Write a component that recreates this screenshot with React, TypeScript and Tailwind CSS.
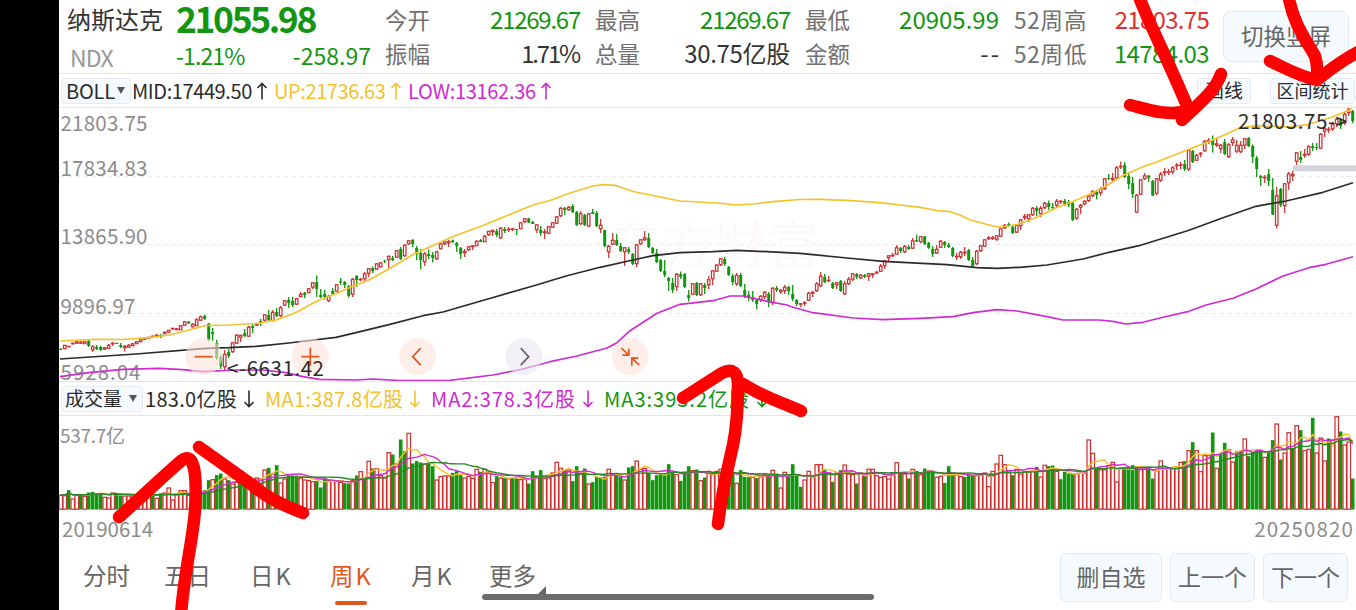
import type { ReactNode } from "react";
import clsx from "clsx";

const RED = "#cc3333";
const GREEN = "#0f980c";
const YELLOW = "#f4c22c";
const PURPLE = "#cf2bd0";

const STEP = 4;
const FIRST_X = 1.7;

// weekly candles: [open, close, high, low] on the chart's vertical scale
const candles: number[][] = [
  [349, 350, 348, 350], [349, 345, 345, 349], [347, 346, 346, 347], [344, 343, 342.5, 344.5], [343.5, 341.5, 341, 344], [343.5, 342, 341, 344],
  [344, 341.5, 341, 344], [341, 346, 340, 347], [350, 346.5, 345, 352], [347, 349, 345, 350], [347, 350, 346, 351], [349.5, 347.5, 347, 350],
  [348.5, 345, 344, 349], [344, 343, 342, 346], [343, 344, 342.5, 344], [345, 347, 343, 348], [348, 346, 345, 351.5], [347.5, 345, 344, 348],
  [346, 343.5, 343, 346], [344, 341.5, 341, 344], [342, 339.5, 339, 342], [339.5, 338, 337, 340], [338.5, 337, 337, 339], [337, 336, 335.5, 337],
  [337, 335, 334, 337], [335, 337, 334, 338], [334, 332, 331.5, 334], [332.5, 330, 330, 333], [329, 328, 328, 330], [330, 328.5, 328, 330],
  [330, 325.5, 325, 330], [325.5, 321.5, 321, 326], [321.5, 323.5, 321, 324], [327, 324, 323, 327.5], [326, 319.5, 318, 326], [320.5, 316.5, 315.5, 321],
  [316, 319, 314.5, 320], [323.5, 340, 323, 341.5], [332, 334, 328, 341], [343, 358, 340, 360], [357, 366, 355, 369], [367, 354, 350, 370],
  [352, 356, 349, 358], [352, 342.5, 342, 353], [343.5, 335, 334, 344], [337.5, 335, 335, 342], [333, 336, 329, 337], [336.5, 327, 326, 337],
  [326, 328, 324, 333], [325.5, 323.5, 323, 326], [321, 323, 319, 326], [320.5, 314.5, 314, 321], [315, 320, 310, 321.5], [321, 312, 310, 321],
  [312, 316, 308, 317], [316, 307.5, 306, 317], [305.5, 300.5, 300, 306], [300, 303, 297, 308], [301, 305, 297, 307], [304.5, 298.5, 298, 305],
  [297, 294, 292, 297], [293, 295, 292, 298], [293, 288.5, 288, 293], [287.5, 282.5, 282, 289], [282, 289, 275.5, 297], [295, 297, 289, 298],
  [294, 297, 290, 299.5], [301, 296, 295, 302], [291, 294, 288, 294], [291.5, 284.5, 284, 292], [281, 282.5, 278, 285], [282, 285, 281, 288],
  [286, 296, 285, 297.5], [294.5, 279, 278, 297], [276, 280, 275, 287], [280, 279, 278, 281], [279, 273.5, 272, 281], [273.5, 268.5, 268, 277],
  [268, 271, 266.5, 273], [269.5, 263.5, 263, 270], [267, 262.5, 262, 267.5], [260.5, 261.5, 260, 263], [260, 256, 255.5, 268], [258, 260, 256, 261],
  [257.5, 250.5, 250, 258], [249, 259, 247, 260], [256, 245, 244, 257], [244, 240.5, 240, 245], [240, 244, 239, 247], [248, 254, 246, 260],
  [253, 260, 249, 269.5], [262, 253.5, 252, 266], [254, 256, 249.5, 259], [255, 258, 252, 262.5], [259, 251.5, 251, 260], [249, 243.5, 243, 249.5],
  [244, 241.5, 241, 245], [243, 241.5, 240, 247], [240.5, 242, 239.5, 243], [243, 246, 242, 252], [248, 254, 247, 259], [253, 251, 249, 257],
  [250, 246.5, 246, 251], [247, 245.5, 245, 250], [246, 241, 240, 246], [240, 242, 239, 242], [242, 236, 235, 242], [235, 231, 231, 236],
  [232, 230, 230, 236], [231, 235, 229, 237], [238, 228, 227, 239], [229, 231, 227, 233], [230, 229, 227, 232], [229.5, 228.5, 228, 231],
  [229, 230, 229, 235], [229, 222.5, 222, 229], [222, 218.5, 218, 223], [218.5, 222.5, 218, 223], [222, 224, 221, 224], [230, 224.5, 224, 233],
  [230, 233, 226, 236], [233, 231.5, 229, 239], [233.5, 226.5, 226, 234], [227.5, 222.5, 222, 228], [223.5, 216.5, 216, 224], [216, 208, 207, 217],
  [208, 210, 207, 215], [210, 207, 206, 211], [206, 212, 204, 213], [212, 225, 211, 226], [224, 213.5, 211, 225], [215, 225, 214, 226],
  [226.5, 213.5, 213, 227], [212, 214, 209, 214], [213, 226, 211, 227], [229, 225, 219, 233], [230, 246, 230, 247], [252, 246, 245, 258],
  [244.5, 240, 233, 245], [240, 245, 234, 246], [246, 251, 243, 252], [252, 247.5, 247, 266], [249, 252, 247, 254], [254, 264, 253, 265],
  [264, 244.5, 244, 267], [244, 239.5, 239, 245], [240, 237.5, 231, 241], [238, 247, 233, 248], [248, 253, 247, 254], [253, 262, 249, 263],
  [260, 271, 259, 272], [271, 275, 260, 277], [278, 281, 277, 291], [283, 290, 278, 293], [287, 274, 273, 291], [274, 277, 271.5, 279],
  [274, 287, 273, 288], [295, 298, 290, 301.5], [294.5, 283.5, 283, 295], [283, 295, 282, 296], [295, 283.5, 283, 296], [285, 288, 283, 294],
  [285, 279.5, 276, 289], [279, 270.5, 270, 285], [271.5, 265, 264, 272], [265, 258.5, 258, 266], [259, 264, 257, 266], [267, 275, 266, 276],
  [276, 282, 274, 285], [284, 275, 273, 286], [275, 286, 273, 287], [290, 297, 284, 298], [295, 298, 291, 301], [297, 300, 291, 302],
  [300, 304, 299, 309.5], [300, 296, 295, 302], [297, 292, 291, 299], [294, 302, 292, 307], [303, 288, 287, 305], [288, 290, 286, 292],
  [292, 290, 289, 294], [291, 287, 285, 294], [287, 291, 286, 295], [294, 299, 285, 301], [300, 304, 299, 306], [304, 303.5, 303, 307],
  [303, 302.5, 301, 306], [300.5, 293, 292, 301], [293.5, 292, 291, 297], [291, 283.5, 282, 292], [286, 276, 272, 287], [277, 282, 274, 283],
  [281, 280, 276, 282], [283, 288, 282, 289], [285, 282.5, 282, 289], [281, 291, 280, 292], [294, 283.5, 281, 295], [284, 279, 277, 285],
  [279.5, 273.5, 273, 281], [274, 277, 273, 279], [278, 275, 274, 279], [275, 277, 274, 278], [276.5, 273.5, 273, 281], [275, 273.5, 273, 278],
  [273, 272, 271, 274], [271.5, 266, 264, 272], [266, 260.5, 260, 269], [258, 255.5, 255, 261], [256, 255, 253, 257], [254.5, 247.5, 245, 255],
  [248, 251, 247, 253], [252, 246, 245, 253], [247, 249, 245, 250], [248.5, 240.5, 238, 249], [240, 241.5, 234.5, 242], [242, 236.5, 236, 243],
  [236.5, 244, 236, 245], [243, 248, 242, 249], [249, 254, 246, 257], [253.5, 249, 245, 254], [247.5, 241, 240, 248], [242, 245, 241, 248],
  [245, 247, 243, 248], [248, 256, 247, 257], [257, 256, 253, 260], [257, 252, 251, 259], [253, 252, 247, 256], [250, 260, 249, 261],
  [260, 266, 257, 267], [264, 251, 250, 265], [251, 245.5, 245, 252], [246.5, 239.5, 239, 247], [239, 237.5, 236, 240], [238, 237.5, 236, 240],
  [239.5, 235.5, 235, 241], [236.5, 228.5, 228, 237], [228, 225, 224, 229], [224, 226, 222.5, 227], [227, 233, 226, 234], [232.5, 225, 224, 233],
  [226, 219.5, 219, 230], [218, 216, 214, 220], [219, 214.5, 214, 222], [215, 208, 207, 216], [208, 211, 206, 216], [214, 208, 206, 217],
  [208, 203, 202, 209], [203, 207, 200.5, 210], [207, 208, 203, 209], [205.5, 201, 199, 208], [202, 201, 200, 204], [201, 204, 199, 206],
  [202, 205, 200, 207], [203, 220, 202, 221], [218.5, 209, 208, 220], [207.5, 205, 204, 214], [204, 201, 200, 205], [201, 196, 195, 202],
  [196, 191.5, 190, 197], [192, 195, 190, 199.5], [193, 188.5, 187, 196], [189, 178.5, 178, 190], [178, 179, 174, 180], [180, 178, 173, 181],
  [178, 167.5, 166, 179], [167, 166, 161.5, 169], [165, 177, 162, 178], [176, 184, 172, 189], [183, 194, 177, 198], [212.5, 195, 194, 213],
  [194.5, 179.5, 179, 195], [179, 175.5, 173, 180], [175.5, 178, 175, 182], [181, 195.5, 180, 196], [193.5, 178.5, 178, 195], [180.5, 174, 172, 182],
  [173, 171.5, 168, 176], [172, 171.5, 169, 175], [172, 167.5, 166, 174], [166, 165, 163, 170], [165, 164.5, 162, 169], [164, 169, 160, 171],
  [169.5, 150, 149, 171], [151, 162, 150, 163], [160.5, 155, 154, 161], [154, 153, 152, 157], [151, 141, 140, 152], [142, 140, 138, 144],
  [140, 145, 135.5, 152.5], [145.5, 143.5, 138, 147], [149, 145, 144, 153], [142, 154, 139, 155], [157, 144.5, 143, 158], [143, 139.5, 137, 146],
  [151.5, 145, 140, 153], [152, 145, 141, 153], [145.5, 138.5, 138, 149], [138, 146, 137, 147], [146, 157, 144.5, 163], [158, 169, 156, 177],
  [176, 178, 175, 186], [178, 177, 175, 183], [174, 181, 169, 186], [190, 214.5, 178, 215], [225.5, 195.5, 187, 228.5], [189, 205, 188, 207],
  [206, 183.5, 183, 213], [183, 173.5, 172, 190], [176, 174, 171, 181], [161.5, 152.5, 152, 165], [157, 160, 151, 163], [155.5, 154, 149, 158],
  [154.5, 146.5, 145, 156], [146, 148, 143, 151], [147, 148, 143, 150], [148.5, 134, 133, 149], [131.5, 128.5, 127, 137], [130, 129, 127, 133],
  [129, 124, 122, 131], [124, 119, 118, 127], [120, 126, 118, 129], [123, 114, 112, 125], [113, 109, 108, 116], [111, 121, 110, 123],
];

// weekly turnover, negative for a falling week
const volumes: number[] = [
  44, 43, -58, 33, 45, -44, 41, -51, -53, -49, -49, 38, 36, 51, -50, -43, 42, 42, 42, 42, 42, 43, 45, -46, 35, -49, 51, 66, 30, 46, 58, 58, 44, 45, 60, -52,
  -58, -88, 91, -103, -108, 93, -88, 78, 83, -80, -83, 88, -90, 96, 93, 120, -125, 108, -133, 81, 93, -106, -103, -102, 96, 90, 88, 85, -85, -66, -95, 88,
  86, 86, 83, -79, -78, 88, -102, 115, -96, 146, -123, 124, 103, 96, 172, -165, 138, -210, -175, 230, -138, -145, -141, 138, -138, -130, 90, 100, 102, 102,
  -110, -115, -103, 96, 101, 95, 122, -113, 122, 110, 82, -100, 96, -94, 94, -96, -94, 91, 93, -78, -115, 100, -118, 95, 96, 111, 143, 125, -118, 120,
  -85, -130, 110, -123, 78, -82, -98, -97, -98, 122, 106, -103, -98, 90, -126, -130, 147, 123, 125, -110, -88, -103, -106, -106, -136, -115, 106, -86,
  -113, -130, 118, -120, 88, -96, 116, 106, 116, 122, -113, -113, -110, 80, -118, -98, -97, 98, -94, 98, 108, -103, 119, -106, 66, 113, -100, -136, -103,
  -68, 90, 116, 98, 136, 136, -118, 111, -83, 111, -118, 135, 108, 106, -78, 111, -103, 122, 122, 103, 98, 100, 93, 111, 142, -111, 108, -93, 122, -116,
  106, -123, -118, -113, 98, 101, -80, -130, -111, 106, 100, -98, -106, -103, 103, 106, 111, 70, 116, 138, 164, 136, 118, -103, 122, 108, 113, 116, 116,
  -128, 99, 134, -130, -132, 116, -91, -113, -108, -108, 108, 110, 110, 210, 170, -123, 121, 121, 133, 143, 84, 125, -128, -128, -133, -130, 121, 122,
  -121, -93, 118, 147, 125, 125, 124, 125, 143, -145, 178, -202, 178, 115, 163, 163, -231, 125, -168, -200, 181, 144, -176, -176, 213, -160, -173, -176,
  -178, 158, -176, -208, 258, -150, 171, 232, -185, 253, -238, 178, 182, -275, 171, 216, 147, -213, 210, 280, -234, 195, 204, -93,
];

const upper =
  "1,341 37,339.3 64,339.5 90,337.7 110,335 130,330 147,325.5 170,325 197,323.5 217,320 237,312.5 257,301.5 280,292.5 291,287.3 308,281 328,270 341,262.5 354,254.5 374,245.5 394,236.5 424,225.5 474,205 491,200.5 511,193 534,186 544,184.7 556,185.3 574,191.5 594,195.5 621,201 658,203 678,205 694,204 714,201.7 741,199.5 760,199.3 788,200.3 821,202.7 841,205 861,207.3 878,210.5 891,211.7 901,215 911,220 934,226 941,227 958,224.5 974,219 998,207.5 1014,201.5 1030,194.5 1047,186 1064,175.5 1087,165.5 1097,162.3 1130,149.3 1150,141.5 1164,135.5 1180,128.3 1197,125.7 1214,126.3 1230,127 1250,124.3 1274,116.7 1293,108.8";
const middle =
  "1,359 77,354 147,348.3 170,347.7 197,346.3 230,343 277,337.3 297,332.7 330,324.7 364,315.7 384,312 428,299.3 474,286 508,275.7 541,267.3 574,260 594,255.7 621,252.7 654,251.7 678,250.3 708,251.7 741,253.3 754,254.7 788,258 824,261.3 888,264.7 918,267.7 938,268.3 961,267.3 988,265 1024,259 1050,252.3 1080,245.7 1130,230.3 1164,217.7 1197,206.3 1227,201 1264,192.3 1294,182.7";
const lower =
  "1,376.7 30,372.7 64,369.3 100,368.3 124,369.7 144,371.7 177,370 204,370 227,372.7 244,376.7 260,379.3 297,380 314,379 340,380.5 361,380.7 391,380.3 434,375 464,369 491,361.7 518,356 548,348 558,342.7 571,330.7 598,313.3 621,304.3 654,300.7 671,296 684,296 708,301.3 728,305 734,307.3 754,312.7 794,318 824,319.7 861,318.3 894,316.7 914,312.7 938,309.7 958,311 988,316.7 1004,320 1040,320 1054,321.3 1067,324 1084,322.3 1104,317.3 1130,311.3 1147,305 1174,298.3 1197,289 1224,276 1250,267.7 1267,264.3 1294,256.7";

const VOLUME_BASE = 93.5;

function movingAverage(days: number) {
  return volumes
    .map((_, i) => {
      const slice = volumes.slice(Math.max(0, i - days + 1), i + 1);
      const mean = slice.reduce((sum, v) => sum + Math.abs(v), 0) / slice.length;
      return `${FIRST_X + i * STEP},${(VOLUME_BASE - mean / 3).toFixed(1)}`;
    })
    .join(" ");
}

const quotes = [
  { label: "今开", value: "21269.67", color: "text-[#12960f]", tracking: "tracking-[-1.25px]", width: "w-[195px]" },
  { label: "最高", value: "21269.67", color: "text-[#12960f]", tracking: "tracking-[-1.25px]", width: "w-[195px]" },
  { label: "最低", value: "20905.99", color: "text-[#12960f]", tracking: "tracking-[0px]", width: "w-[194px]" },
  { label: "52周高", value: "21803.75", color: "text-[#e03131]", tracking: "tracking-[-0.7px]", width: "w-[195px]" },
  { label: "振幅", value: "1.71%", color: "text-[#333]", tracking: "tracking-[-2.2px]", width: "w-[194px]" },
  { label: "总量", value: "30.75亿股", color: "text-[#333]", tracking: "tracking-[-0.3px]", width: "w-[195px]" },
  { label: "金额", value: "--", color: "text-[#333]", tracking: "tracking-[2px]", width: "w-[196px]" },
  { label: "52周低", value: "14784.03", color: "text-[#12960f]", tracking: "tracking-[-0.6px]", width: "w-[195px]" },
];

const tabs = [
  { label: "分时", width: "w-[81px]" },
  { label: "五日", width: "w-[86px]" },
  { label: "日K", width: "w-[80px]", latin: true },
  { label: "周K", width: "w-[81px]", latin: true, active: true },
  { label: "月K", width: "w-[78px]", latin: true },
  { label: "更多", width: "w-[60px]", more: true },
];

const axis = [
  { y: 130.5, label: "21803.75", width: 87 },
  { y: 176, label: "17834.83", width: 87 },
  { y: 244, label: "13865.90", width: 87 },
  { y: 313.5, label: "9896.97", width: 75 },
  { y: 380, label: "5928.04", width: 80 },
];

function Arrow({ down }: { down?: boolean }) {
  return (
    <svg width="12" height="18" viewBox="0 0 12 18" fill="none" stroke="currentColor" strokeWidth="1.6" className={clsx("shrink-0", down && "rotate-180")}>
      <path d="M6 17.5V1.5M1.5 6 6 1.5 10.5 6" />
    </svg>
  );
}

function Reading({ children, width, tracking, color, down }: { children: ReactNode; width: string; tracking: string; color: string; down?: boolean }) {
  return (
    <div className={clsx("flex items-center", color)}>
      <span className={clsx("shrink-0 whitespace-nowrap text-[20px] leading-[24px]", width, tracking)}>{children}</span>
      <Arrow down={down} />
    </div>
  );
}

function Chip({ children, className }: { children: ReactNode; className?: string }) {
  return (
    <button className={clsx("flex h-[26px] shrink-0 items-center whitespace-nowrap rounded border border-[#e6ebf1] bg-[#f5faff] text-[#2b2b2b]", className)}>
      {children}
    </button>
  );
}

function Caret() {
  return <span className="border-x-[4px] border-t-[7px] border-x-transparent border-t-[#555]" />;
}

function RoundButton({ cx, muted, children }: { cx: number; muted?: boolean; children: ReactNode }) {
  return (
    <g transform={`translate(${cx} 356.7)`} stroke={muted ? "#666" : "#e2571c"} strokeWidth="1.7" fill="none">
      <circle r="18.5" fill={muted ? "#ebe6f0" : "#fde3dc"} fillOpacity="0.6" stroke="none" />
      {children}
    </g>
  );
}

function PriceChart() {
  return (
    <svg width="1297" height="273" viewBox="0 108 1297 273" className="block shrink-0">
      <g stroke="#ececec" strokeDasharray="5 3">
        <path d="M0 176.5H1297M0 244.5H1297M0 313.5H1297" />
      </g>
      <text x="550" y="264" fontSize="51" fill="#fdf9fb" textLength="210">东方财富</text>
      <g fill="#8c8c8c" fontSize="20.5">
        {axis.map((a) => (
          <text key={a.y} x="1.5" y={a.y} textLength={a.width}>{a.label}</text>
        ))}
      </g>
      <rect x="1234" y="165.3" width="63" height="6" fill="#d3d3dc" />
      {candles.map(([open, close, high, low], i) => {
        const x = FIRST_X + i * STEP;
        const top = Math.min(open, close);
        const height = Math.max(Math.abs(open - close), 1);
        if (close > open) {
          return (
            <g key={i} fill={GREEN}>
              <rect x={x - 0.65} y={high} width="1.3" height={low - high} />
              <rect x={x - 1.5} y={top} width="3" height={height} />
            </g>
          );
        }
        return (
          <g key={i} stroke={RED} strokeWidth="1.25" fill="#fff">
            <path d={`M${x} ${high}V${low}`} />
            <rect x={x - 1.25} y={top + 0.3} width="2.5" height={Math.max(height - 0.6, 0.5)} />
          </g>
        );
      })}
      <g fill="none" strokeWidth="1.7" strokeLinejoin="round">
        <polyline points={upper} stroke={YELLOW} />
        <polyline points={middle} stroke="#2b2b2b" />
        <polyline points={lower} stroke={PURPLE} />
      </g>
      <RoundButton cx={144.7}><path d="M-9 0H9" /></RoundButton>
      <RoundButton cx={251.3}><path d="M-9 0H9M0-9V9" /></RoundButton>
      <RoundButton cx={358.7}><path d="M3-8.5-5 0 3 8.5" /></RoundButton>
      <RoundButton cx={464.7} muted><path d="M-3-8.5 5 0-3 8.5" /></RoundButton>
      <RoundButton cx={571.3}><path d="M-9-8.5-2-2M-8-1.5H-1.5V-8M9 8.5 2 2M1.5 9V1.5H8" /></RoundButton>
      <g fill="#2b2b2b" fontSize="20.5">
        <text x="168" y="376" textLength="97">&lt;-6631.42</text>
        <text x="1179" y="129" textLength="109">21803.75-&gt;</text>
      </g>
    </svg>
  );
}

function VolumeChart() {
  return (
    <svg width="1297" height="94" viewBox="0 0 1297 94" className="block shrink-0">
      {volumes.map((v, i) => {
        const x = FIRST_X + i * STEP;
        const height = Math.abs(v) / 3;
        return v < 0 ? (
          <rect key={i} x={x - 1.8} y={VOLUME_BASE - height} width="3.6" height={height} fill={GREEN} />
        ) : (
          <rect key={i} x={x - 1.7} y={VOLUME_BASE - height + 0.5} width="3.5" height={height - 0.8} fill="#fff" stroke={RED} strokeWidth="1.25" />
        );
      })}
      <g fill="none" strokeWidth="1.4" strokeLinejoin="round">
        <polyline points={movingAverage(5)} stroke={YELLOW} />
        <polyline points={movingAverage(10)} stroke={PURPLE} />
        <polyline points={movingAverage(20)} stroke="#258a25" />
      </g>
      <text x="1" y="27" fontSize="19" fill="#8c8c8c" textLength="65">537.7亿</text>
    </svg>
  );
}

function Marks() {
  return (
    <svg width="1356" height="610" viewBox="0 0 1356 610" className="pointer-events-none absolute inset-0" fill="none" stroke="#ff0000" strokeWidth="12.5" strokeLinecap="round" strokeLinejoin="round">
      <path d="M119 517C145 494 160 479 181 461Q190 454 193 465Q197 476 195 510C193 540 184 572 181 615" />
      <path d="M199 447 251 484C266 497 280 504 303 513" />
      <path d="M683 398 722 373Q738 365 738 386C738 405 737 425 733 445C727 472 722 490 718 524" />
      <path d="M743 384C763 397 778 401 801 411" />
      <path d="M1138-6C1147 20 1162 46 1188 108" />
      <path d="M1130 105C1150 110 1164 115 1184 112M1221 74C1215 92 1198 104 1182 120" />
      <path d="M1288-6C1293 24 1306 40 1315 56Q1318 65 1317 78" />
      <path d="M1270 61C1285 68 1298 76 1317 80C1330 70 1340 61 1362 50" />
    </svg>
  );
}

export default function App() {
  return (
    <div className="relative flex h-[610px] w-[1356px] overflow-hidden bg-black pl-[59px] font-['Noto_Sans_CJK_SC',sans-serif]">
      <main className="flex w-[1297px] flex-col bg-white">
        <header className="flex h-[74px] shrink-0 border-b border-[#e5e5e5] pl-2">
          <div className="w-[109px] pt-[1px]">
            <h1 className="text-[24px] leading-[36px] text-[#333]">纳斯达克</h1>
            <div className="pl-[3px] text-[23px] leading-[40px] tracking-[-0.8px] text-[#999]">NDX</div>
          </div>
          <div className="w-[210px] text-[#12960f]">
            <div className="-mt-[2px] text-[35.5px] font-bold leading-[40px] tracking-[-2.4px]">21055.98</div>
            <div className="flex w-[195px] justify-between pt-[1px] text-[23px] leading-[33px]">
              <span className="tracking-[-0.9px]">-1.21%</span>
              <span className="tracking-[0px]">-258.97</span>
            </div>
          </div>
          <div className="grid shrink-0 grid-cols-[210px_210px_209px_209px] grid-rows-[34px_34px] pt-[2px] text-[24px] leading-[34px]">
            {quotes.map((q) => (
              <div key={q.label} className={clsx("-ml-px flex justify-between whitespace-nowrap", q.width)}>
                <span className={clsx("text-[22.5px] text-[#707070]", q.label.startsWith("52") && "tracking-[0.8px]")}>{q.label}</span>
                <span className={clsx(q.color, q.tracking)}>{q.value}</span>
              </div>
            ))}
          </div>
          <button className="-ml-px mt-[11px] h-[51px] w-[126px] shrink-0 rounded-lg border border-[#e3e9f0] bg-[#f5faff] pb-[2px] text-[22.5px] text-[#666]">
            切换竖屏
          </button>
        </header>

        <div className="flex h-[34px] shrink-0 items-center border-b border-[#e5e5e5] pl-[2px] pr-px">
          <Chip className="w-[70px] gap-[2px] pl-[4px] text-[20px]">
            <span className="tracking-[-0.2px]">BOLL</span>
            <Caret />
          </Chip>
          <div className="ml-[1px] flex gap-[6px]">
            <Reading width="w-[124px]" tracking="tracking-[-0.4px]" color="text-[#2b2b2b]">MID:17449.50</Reading>
            <Reading width="w-[116px]" tracking="tracking-[-0.4px]" color="text-[#f4c22c]">UP:21736.63</Reading>
            <Reading width="w-[132px]" tracking="tracking-[-0.3px]" color="text-[#cf2bd0]">LOW:13162.36</Reading>
          </div>
          <div className="ml-auto flex gap-[19px]">
            <Chip className="w-[54px] justify-center text-[19px]">画线</Chip>
            <Chip className="w-[85px] justify-center text-[18px]">区间统计</Chip>
          </div>
        </div>

        <PriceChart />

        <div className="flex h-[35px] shrink-0 items-center border-y border-[#e5e5e5] pl-[2px]">
          <Chip className="w-[82px] gap-[7px] pl-[3px] text-[19px]">
            <span>成交量</span>
            <Caret />
          </Chip>
          <div className="ml-[2px] flex gap-[10px]">
            <Reading down width="w-[98px]" tracking="tracking-[0.3px]" color="text-[#2b2b2b]">183.0亿股</Reading>
            <Reading down width="w-[144px]" tracking="tracking-[0.3px]" color="text-[#f4c22c]">MA1:387.8亿股</Reading>
            <Reading down width="w-[151px]" tracking="tracking-[0.9px]" color="text-[#cf2bd0]">MA2:378.3亿股</Reading>
            <Reading down width="w-[152px]" tracking="tracking-[1px]" color="text-[#12960f]">MA3:393.2亿股</Reading>
          </div>
        </div>

        <VolumeChart />

        <div className="flex h-[34px] shrink-0 justify-between pl-[3px] pr-[2px] text-[20.5px] leading-[36px] text-[#8c8c8c]">
          <span>20190614</span>
          <span className="tracking-[1.1px]">20250820</span>
        </div>

        <nav className="flex h-[66px] shrink-0 items-start pl-[24px] pt-[9px]">
          {tabs.map((tab) => (
            <div key={tab.label} className={clsx("shrink-0", tab.width)}>
              <button
                className={clsx(
                  "relative h-[51px] whitespace-nowrap text-[23.5px]",
                  tab.active ? "text-[#e2571c]" : "text-[#666]",
                  tab.latin && "tracking-[2px]",
                )}
              >
                <span className="block h-[51px] leading-[44px]">{tab.label}</span>
                {tab.active && <span className="absolute bottom-[-1px] left-[5px] h-[4px] w-[32px] rounded-full bg-[#e2571c]" />}
                {tab.more && <span className="absolute left-[49px] top-[33px] border-b-[8px] border-l-[8px] border-b-[#666] border-l-transparent" />}
              </button>
            </div>
          ))}
          <div className="ml-auto flex gap-[8px] pr-[8px] text-[23px] text-[#666]">
            <button className="h-[49px] w-[102px] rounded-md border border-[#e3e9f0] bg-[#f5faff] pb-[2px]">删自选</button>
            <button className="h-[49px] w-[85px] rounded-md border border-[#e3e9f0] bg-[#f5faff] pb-[2px]">上一个</button>
            <button className="h-[49px] w-[85px] rounded-md border border-[#e3e9f0] bg-[#f5faff] pb-[2px]">下一个</button>
          </div>
        </nav>
      </main>
      <div className="absolute left-[482px] top-[594px] h-[6px] w-[392px] rounded-full bg-[#6c6c6c]" />
      <Marks />
    </div>
  );
}
